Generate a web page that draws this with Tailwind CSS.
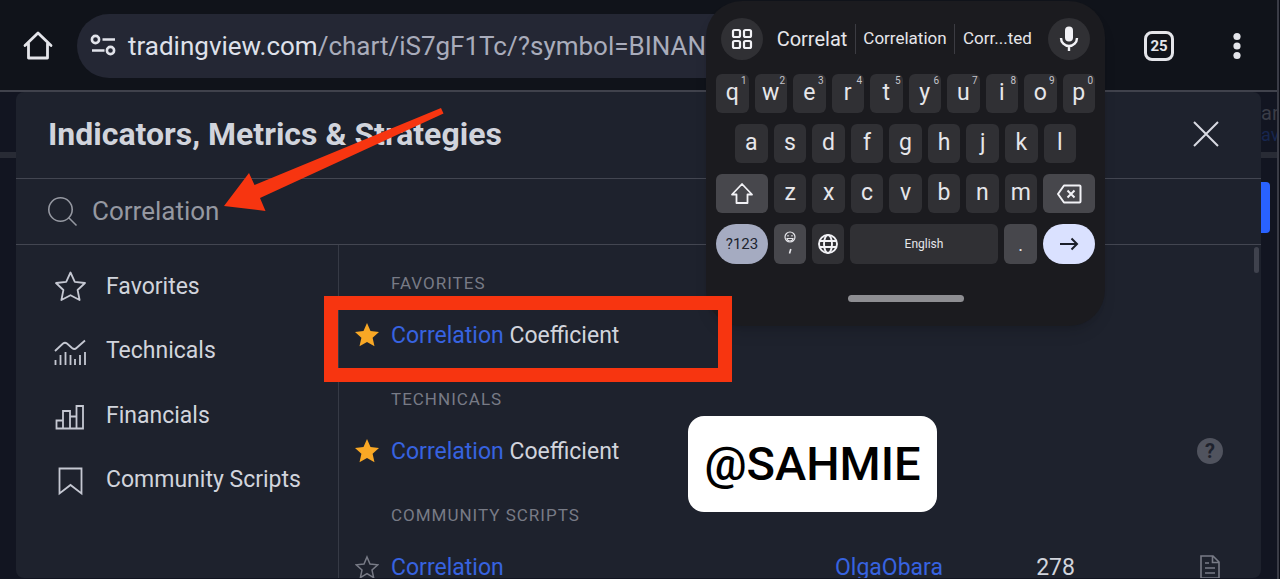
<!DOCTYPE html>
<html lang="en">
<head>
  <meta charset="UTF-8" />
  <meta name="viewport" content="width=device-width, initial-scale=1.0" />
  <title>Indicators, Metrics &amp; Strategies</title>
  <script src="https://cdn.jsdelivr.net/npm/@tailwindcss/browser@4"></script>
</head>
<body class="relative h-screen overflow-hidden bg-[#0c0e17] pr-px font-['Roboto',sans-serif] text-[#d1d4dc]">
  <div class="flex h-full flex-col border-r-2 border-[#3a3c46]">

    <!-- Browser toolbar -->
    <header class="flex h-[92px] shrink-0 items-center border-b-2 border-[#40424c] bg-[#10131a] pt-[2px]">
      <button type="button" aria-label="Home" class="ml-[22px] shrink-0">
        <svg class="size-8" viewBox="0 0 32 32" fill="none" stroke="#e4e5ea" stroke-width="2.800" stroke-linejoin="round" stroke-linecap="round"><path d="M3 15.500 16 3l13 12.500M6.500 13.500v14.500h19v-14.500" /></svg>
      </button>
      <button type="button" aria-label="Edit address" class="ml-[23px] flex h-16 flex-1 items-center overflow-hidden rounded-full bg-[#242734] pl-[13px] text-left">
        <svg class="h-6 w-[27px] shrink-0" viewBox="0 0 27 24" fill="none" stroke="#e1e3ea" stroke-width="2.600"><circle cx="5.500" cy="5.500" r="3.600" /><path d="M12.500 5.500H25M2 16.500h12.500" /><circle cx="20.500" cy="16.500" r="3.600" /></svg>
        <span class="ml-[11px] text-[26px] whitespace-nowrap text-[#a9acbb]"><span class="text-[#dfe1ea]">tradingview.com</span>/chart/iS7gF1Tc/?symbol=BINANCE</span>
      </button>
      <button type="button" aria-label="Tabs" class="ml-[60px] flex size-[30px] shrink-0 items-center justify-center rounded-lg border-3 border-[#e4e5ea] text-[15px] font-bold text-[#e4e5ea]">25</button>
      <button type="button" aria-label="Menu" class="mr-[31px] ml-[54px] shrink-0">
        <svg class="h-7 w-[18px]" viewBox="0 0 18 28" fill="#e4e5ea"><circle cx="9" cy="4.500" r="3.600" /><circle cx="9" cy="14" r="3.600" /><circle cx="9" cy="23.500" r="3.600" /></svg>
      </button>
    </header>

    <main class="relative flex min-h-0 flex-1 flex-col bg-[#121521] px-4 pb-px">
      <!-- Dimmed chart page behind the dialog -->
      <div class="absolute inset-x-0 top-[60px] h-[6px] bg-[#282b35]"></div>
      <div class="absolute top-[10px] right-0 w-4 overflow-hidden text-[20px] leading-[22px] text-[#3a3d47]">ar<div class="text-[18px] text-[#17264f]">av</div></div>
      <div class="absolute top-[90px] right-[7px] h-[51px] w-5 rounded bg-[#2962ff]"></div>

      <section role="dialog" aria-labelledby="dialog-title" class="relative flex min-h-0 flex-1 flex-col overflow-hidden rounded-lg bg-[#1e222d]">
        <div class="flex h-[87px] shrink-0 items-center justify-between border-b border-[#434651] pr-[40px] pb-[2px] pl-8">
          <h1 id="dialog-title" class="text-[32px] font-bold">Indicators, Metrics &amp; Strategies</h1>
          <button type="button" aria-label="Close">
            <svg class="size-[30px]" viewBox="0 0 30 30" fill="none" stroke="#d8dae2" stroke-width="2"><path d="m3 3 24 24M27 3 3 27" /></svg>
          </button>
        </div>

        <label class="flex h-[66px] shrink-0 items-center border-b border-[#434651] pl-8">
          <svg class="size-[30px] shrink-0" viewBox="0 0 30 30" fill="none" stroke="#9598a1" stroke-width="1.600"><circle cx="12.500" cy="12.500" r="11.700" /><path d="m20.500 20.500 8 8" /></svg>
          <input type="text" aria-label="Search" value="Correlation" class="ml-[14px] min-w-0 flex-1 bg-transparent text-[26px] text-[#9598a1] outline-none" />
        </label>

        <div class="flex min-h-0 flex-1">
          <nav class="flex w-[323px] shrink-0 flex-col border-r border-[#363a45] pt-[10px] text-[23px]">
            <a href="#favorites" class="flex h-16 items-center gap-5 pl-[38px]">
              <svg class="size-8" viewBox="0 0 32 32" fill="none" stroke="#c5c8d2" stroke-width="1.800" stroke-linejoin="round"><path d="m16.500 1.500 4.300 9.300 10.200 1.200-7.400 7 2 10-9.100-4.800-9.100 4.800 2-10-7.400-7 10.200-1.200z" /></svg>
              Favorites
            </a>
            <a href="#technicals" class="flex h-[65px] items-center gap-5 pl-[38px]">
              <svg class="size-8" viewBox="0 0 32 32" fill="none" stroke="#c5c8d2" stroke-width="1.800"><path d="m1 15 8-7.500q2-1.500 4 0l5 4.500q2.500 2 4.500 0L31 4.500M1.500 24v5M6.500 19v10M11.500 16v13M16.500 19v10M21 23v6M26 19v10M31 16v13" /></svg>
              Technicals
            </a>
            <a href="#financials" class="flex h-16 items-center gap-5 pl-[38px]">
              <svg class="size-8" viewBox="0 0 32 32" fill="none" stroke="#c5c8d2" stroke-width="1.800"><path d="M2.500 28.500v-8H9v8zM9 28.500V11h7v17.500zM16 28.500v-12h6.500v12M22.500 28.500V6h6.500v22.500zM9 28.500h13.500" /></svg>
              Financials
            </a>
            <a href="#scripts" class="flex h-16 items-center gap-5 pl-[38px]">
              <svg class="size-8" viewBox="0 0 32 32" fill="none" stroke="#c5c8d2" stroke-width="1.800"><path d="M5.500 4.500h22v25L16.500 21l-11 8.500z" /></svg>
              Community Scripts
            </a>
          </nav>

          <div class="relative min-w-0 flex-1">
            <table class="w-full table-fixed border-collapse text-[23px]">
              <colgroup>
                <col class="w-[52px]" />
                <col />
                <col class="w-[240px]" />
                <col class="w-[132px]" />
                <col class="w-[186px]" />
              </colgroup>
              <tbody id="favorites">
                <tr class="h-[70px]">
                  <td></td>
                  <th colspan="4" class="pt-2 text-left text-[17px] font-normal tracking-[1px] text-[#787b86]">FAVORITES</th>
                </tr>
                <tr class="h-10">
                  <td class="pl-4"><svg class="size-6" viewBox="0 0 24 24" fill="#f9a825"><path d="m12 0 3.500 8 8.500.9-6.400 5.800 1.900 8.600L12 18.900l-7.500 4.400 1.900-8.600L0 8.900 8.500 8z" /></svg></td>
                  <td colspan="4" class="pt-[2px]"><a href="#"><span class="text-[#3763e0]">Correlation</span> Coefficient</a></td>
                </tr>
              </tbody>
              <tbody id="technicals">
                <tr class="h-[76px]">
                  <td></td>
                  <th colspan="4" class="pt-[14px] text-left text-[17px] font-normal tracking-[1px] text-[#787b86]">TECHNICALS</th>
                </tr>
                <tr class="h-10">
                  <td class="pl-4"><svg class="size-6" viewBox="0 0 24 24" fill="#f9a825"><path d="m12 0 3.500 8 8.500.9-6.400 5.800 1.900 8.600L12 18.900l-7.500 4.400 1.900-8.600L0 8.900 8.500 8z" /></svg></td>
                  <td colspan="3" class="pt-[2px]"><a href="#"><span class="text-[#3763e0]">Correlation</span> Coefficient</a></td>
                  <td class="pr-[38px]">
                    <button type="button" aria-label="Help" class="ml-auto flex size-[26px] items-center justify-center rounded-full bg-[#50535e] text-[20px] leading-none font-bold text-[#1e222d]">?</button>
                  </td>
                </tr>
              </tbody>
              <tbody id="scripts">
                <tr class="h-[76px]">
                  <td></td>
                  <th colspan="4" class="pt-[14px] text-left text-[17px] font-normal tracking-[1px] text-[#787b86]">COMMUNITY SCRIPTS</th>
                </tr>
                <tr class="h-10">
                  <td class="pl-4"><svg class="size-6" viewBox="0 0 24 24" fill="none" stroke="#787b86" stroke-width="1.500"><path d="m12 2 3 7 7.800.8-5.800 5.200 1.600 7.600L12 18.700l-6.600 3.900L7 15 1.200 9.800 9 9z" /></svg></td>
                  <td class="pt-[2px]"><a href="#" class="text-[#3763e0]">Correlation</a></td>
                  <td class="pt-[2px] text-right"><a href="#" class="text-[#3763e0]">OlgaObara</a></td>
                  <td class="pt-[2px] text-right">278</td>
                  <td class="pr-[38px]">
                    <svg class="ml-auto size-[26px]" viewBox="0 0 26 26" fill="none" stroke="#787b86" stroke-width="1.600"><path d="M4 2h12l6 6v16H4zM15.500 2v6.500H22M8 9h4M8 14h10M8 19h10" /></svg>
                  </td>
                </tr>
              </tbody>
            </table>
            <div class="absolute top-[2px] right-[2px] h-[26px] w-[5px] rounded-sm bg-[#3f424d]"></div>
          </div>
        </div>
      </section>
    </main>
  </div>

  <!-- Floating keyboard -->
  <div class="absolute top-px right-[175px] w-[399px] rounded-[36px] bg-[#1b1b1f] px-[10px] pt-[17px] pb-6 text-[#e6e6ea] shadow-lg">
    <div class="mb-[14px] flex h-[42px] items-center px-[5px]">
      <button type="button" aria-label="Keyboard menu" class="flex size-[42px] items-center justify-center rounded-full bg-[#303034]">
        <svg class="size-6" viewBox="0 0 24 24" fill="none" stroke="#f2f2f6" stroke-width="2.200"><rect x="3" y="3" width="7" height="7" rx="1.500" /><rect x="14" y="3" width="7" height="7" rx="1.500" /><rect x="3" y="14" width="7" height="7" rx="1.500" /><rect x="14" y="14" width="7" height="7" rx="1.500" /></svg>
      </button>
      <button type="button" class="ml-[6px] flex h-[30px] w-[87px] items-center justify-center border-r border-[#3c3c42] text-[20px]">Correlat</button>
      <button type="button" class="flex h-[30px] w-[99px] items-center justify-center border-r border-[#3c3c42] text-[17px]">Correlation</button>
      <button type="button" class="flex h-[30px] flex-1 items-center pl-2 text-[17px]">Corr...ted</button>
      <button type="button" aria-label="Voice input" class="flex size-[42px] items-center justify-center rounded-full bg-[#303034]">
        <svg class="size-7" viewBox="0 0 28 28" fill="none" stroke="#f2f2f6" stroke-width="2.400"><rect x="10" y="1.500" width="8" height="15" rx="4" fill="#f2f2f6" stroke="none" /><path d="M6 13a8 8 0 0 0 16 0M14 21v5" /></svg>
      </button>
    </div>

    <div id="keyboard" class="flex flex-col gap-[11px] text-[23px]">
      <div id="row-1" class="flex h-[39px] gap-[6px]"></div>
      <div id="row-2" class="flex h-[39px] gap-[6px] px-[19px]"></div>
      <div class="flex h-[39px] gap-[6px]">
        <button type="button" aria-label="Shift" class="flex w-[52px] items-center justify-center rounded-md bg-[#47474c]">
          <svg class="size-6" viewBox="0 0 24 24" fill="none" stroke="#f2f2f6" stroke-width="1.800" stroke-linejoin="round"><path d="m12 2 10 10.500h-4.500V21h-11v-8.500H2z" /></svg>
        </button>
        <div id="row-3" class="flex flex-1 gap-[6px]"></div>
        <button type="button" aria-label="Backspace" class="flex w-[52px] items-center justify-center rounded-md bg-[#47474c]">
          <svg class="h-[22px] w-[26px]" viewBox="0 0 26 22" fill="none" stroke="#f2f2f6" stroke-width="2" stroke-linejoin="round"><path d="M8 2.500h15.500q1 0 1 1v15q0 1-1 1H8L2 11zM11.500 7.500l7 7M18.500 7.500l-7 7" /></svg>
        </button>
      </div>
      <div class="flex h-[40px] gap-[6px]">
        <button type="button" class="w-[52px] rounded-full bg-[#a5abc1] text-[15px] text-[#20242f]">?123</button>
        <button type="button" aria-label="Emoji and comma" class="flex w-8 items-center justify-center rounded-md bg-[#47474c]">
          <svg class="h-[26px] w-4" viewBox="0 0 16 26" fill="none" stroke="#e6e6ea" stroke-width="1.200"><circle cx="8" cy="6" r="5" /><path d="M5 7.500h6q-.5 2.500-3 2.500t-3-2.500zM6 4v1.500M10 4v1.500" /><path d="m8.800 18-1.300 4.500" stroke-width="1.600" /></svg>
        </button>
        <button type="button" aria-label="Switch language" class="flex w-8 items-center justify-center rounded-md bg-[#303034]">
          <svg class="size-[22px]" viewBox="0 0 22 22" fill="none" stroke="#f2f2f6" stroke-width="1.900"><circle cx="11" cy="11" r="9" /><ellipse cx="11" cy="11" rx="4" ry="9" /><path d="M2.500 8h17M2.500 14h17" /></svg>
        </button>
        <button type="button" class="flex-1 rounded-md bg-[#303034] text-[12px]">English</button>
        <button type="button" class="w-[33px] rounded-md bg-[#47474c] text-[18px]">.</button>
        <button type="button" aria-label="Enter" class="flex w-[52px] items-center justify-center rounded-full bg-[#dae1ff]">
          <svg class="h-4 w-5" viewBox="0 0 20 16" fill="none" stroke="#1b1f2a" stroke-width="2"><path d="M1 8h17M12.500 2.500 18 8l-5.500 5.500" /></svg>
        </button>
      </div>
    </div>
    <div class="mx-auto mt-[31px] h-[7px] w-[116px] rounded-full bg-[#8e8e92]"></div>
  </div>

  <!-- Annotations -->
  <svg class="absolute top-[104px] left-[220px] h-[112px] w-[228px]" viewBox="220 104 228 112" fill="#f73510"><path d="m224 206 25-33 5.500 12L441 108l2.500 5.500L260 198l5.500 13z" /></svg>
  <div class="absolute top-[296px] left-[324px] h-[86px] w-[408px] border-14 border-[#f73510]"></div>
  <div class="absolute top-[416px] left-[688px] flex h-24 w-[249px] items-center justify-center rounded-2xl bg-white text-[47px] font-medium text-black">@SAHMIE</div>

  <script>
    // Letter keys, one string per row
    const rows = { "row-1": "qwertyuiop", "row-2": "asdfghjkl", "row-3": "zxcvbnm" };

    for (const id in rows) {
      [...rows[id]].forEach(function(letter, i) {
        const key = document.createElement("button");
        key.type = "button";
        key.className = "relative flex-1 rounded-md bg-[#303034] pb-[3px] leading-none";
        key.textContent = letter;
        // The top row carries the digits as hints
        if (id === "row-1") {
          const hint = document.createElement("span");
          hint.className = "absolute top-[2px] right-[2px] text-[10px] leading-none text-[#c4c4ca]";
          hint.textContent = (i + 1) % 10;
          key.appendChild(hint);
        }
        document.getElementById(id).appendChild(key);
      });
    }
  </script>
</body>
</html>
